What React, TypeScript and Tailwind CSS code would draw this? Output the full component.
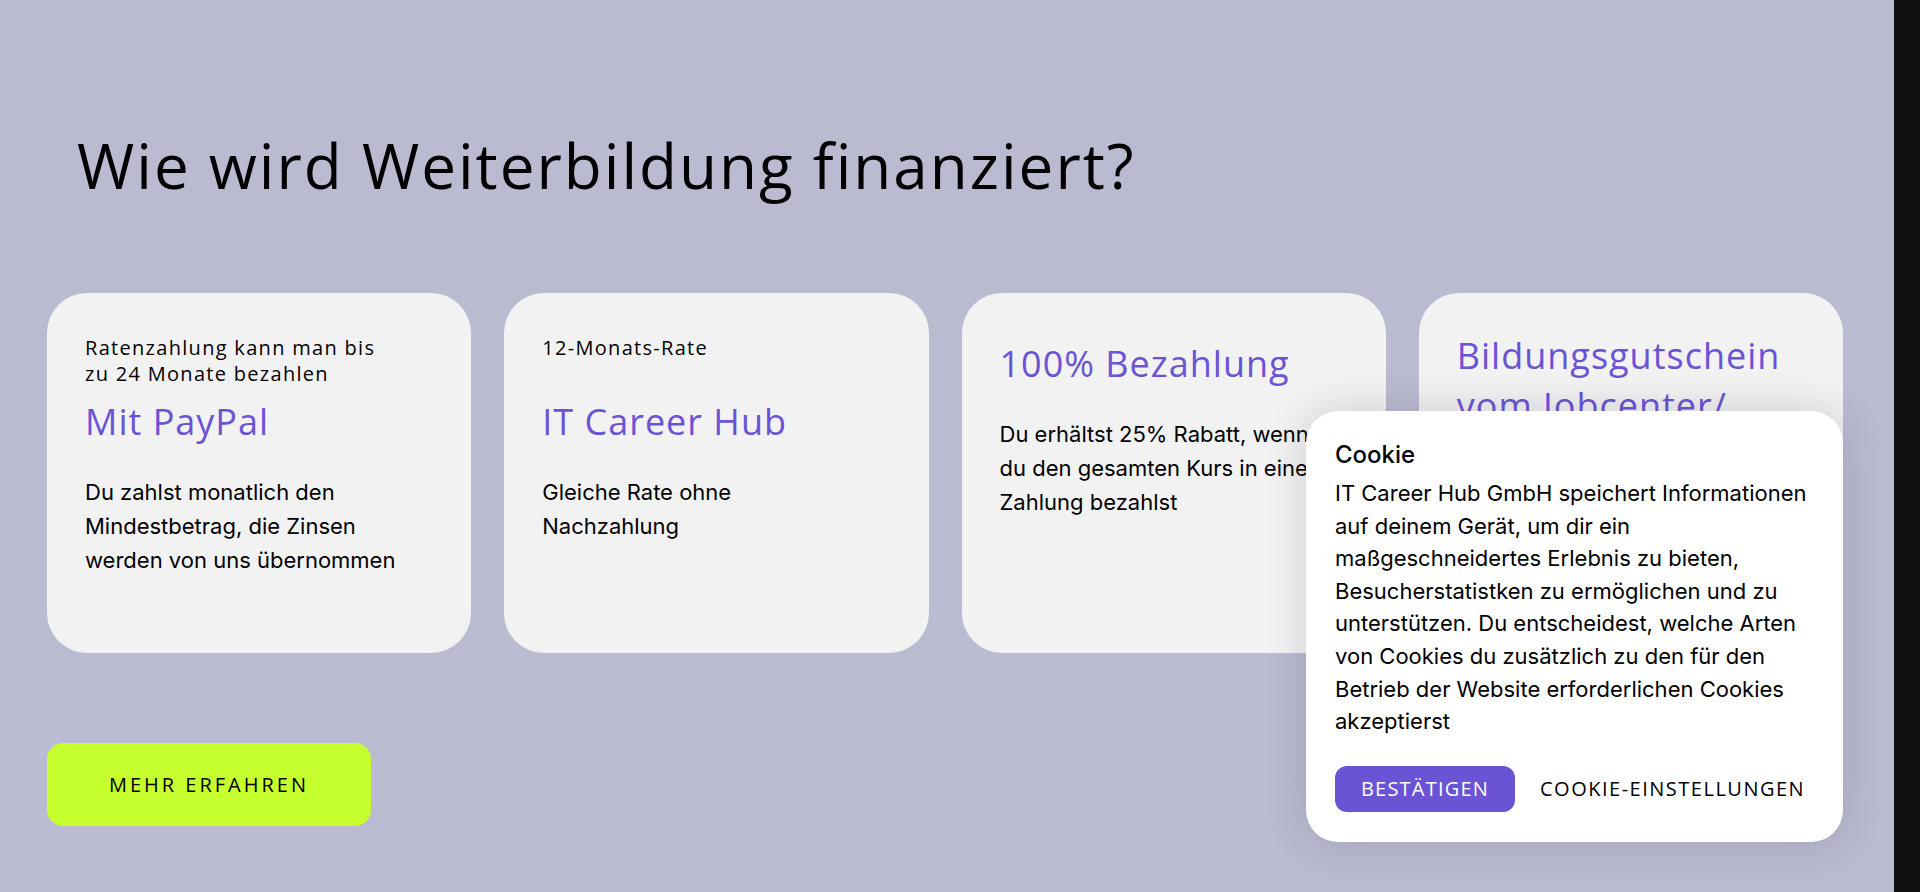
const display = "font-['Open_Sans','Lato',sans-serif]"

type Karte = {
  sub?: string[]
  titel: string[]
  text: string[]
  pt: string
}

const karten: Karte[] = [
  {
    sub: ['Ratenzahlung kann man bis', 'zu 24 Monate bezahlen'],
    titel: ['Mit PayPal'],
    text: ['Du zahlst monatlich den', 'Mindestbetrag, die Zinsen', 'werden von uns übernommen'],
    pt: 'pt-[42px]',
  },
  {
    sub: ['12-Monats-Rate'],
    titel: ['IT Career Hub'],
    text: ['Gleiche Rate ohne', 'Nachzahlung'],
    pt: 'pt-[42px]',
  },
  {
    titel: ['100% Bezahlung'],
    text: ['Du erhältst 25% Rabatt, wenn', 'du den gesamten Kurs in einer', 'Zahlung bezahlst'],
    pt: 'pt-[46px]',
  },
  {
    titel: ['Bildungsgutschein', 'vom Jobcenter/', 'Arbeitsagentur'],
    text: ['Wir sind AZAV-zertifiziert'],
    pt: 'pt-[38px]',
  },
]

function KarteBox({ k }: { k: Karte }) {
  return (
    <div className={`h-[360px] rounded-[40px] bg-[#f2f2f2] pl-[38px] pr-6 overflow-hidden ${k.pt}`}>
      {k.sub && (
        <div className={`h-[52px] text-[20px] leading-[26px] tracking-[1.3px] font-medium text-black ${display}`}>
          {k.sub.map((s) => (
            <div key={s}>{s}</div>
          ))}
        </div>
      )}
      <div className={`${k.sub ? 'mt-[10px]' : ''} text-[36px] leading-[50px] tracking-[1px] font-medium text-[#6b53d6] ${display}`}>
        {k.titel.map((t) => (
          <div key={t}>{t}</div>
        ))}
      </div>
      <div className="mt-[28px] text-[22px] leading-[34px] text-black font-['Inter',sans-serif]">
        {k.text.map((t) => (
          <div key={t}>{t}</div>
        ))}
      </div>
    </div>
  )
}

export default function App() {
  return (
    <div className="relative flex min-h-[892px] w-full bg-[#babbd0]">
      <div className="flex-1 pl-[47px] pr-[51px] pt-[128px]">
        <h1 className={`ml-[30px] text-[62px] leading-[74px] tracking-[2px] font-medium text-black ${display}`}>
          Wie wird Weiterbildung finanziert?
        </h1>

        <div className="mt-[91px] grid grid-cols-4 gap-[33px]">
          {karten.map((k) => (
            <KarteBox key={k.titel[0]} k={k} />
          ))}
        </div>

        <button
          type="button"
          className={`mt-[90px] flex h-[83px] w-[324px] items-center justify-center rounded-[16px] bg-[#c6ff2e] text-[20px] tracking-[3px] font-medium text-black ${display}`}
        >
          MEHR ERFAHREN
        </button>
      </div>

      <div className="w-[26px] bg-[#111111]" />

      <div className="absolute left-[1306px] top-[411px] w-[537px] rounded-[32px] bg-white px-[29px] pt-[28px] pb-[30px] shadow-[0_0_40px_rgba(40,40,80,0.18)] font-['Inter',sans-serif]">
        <div className="text-[24px] leading-[32px] font-medium text-black">Cookie</div>
        <p className="mt-[6px] text-[22px] leading-[32.6px] text-black">
          IT Career Hub GmbH speichert Informationen auf deinem Gerät, um dir ein maßgeschneidertes Erlebnis
          zu bieten, Besucherstatistken zu ermöglichen und zu unterstützen. Du entscheidest, welche Arten von
          Cookies du zusätzlich zu den für den Betrieb der Website erforderlichen Cookies akzeptierst
        </p>
        <div className="mt-[28px] flex items-center gap-[25px]">
          <button
            type="button"
            className={`h-[46px] w-[180px] rounded-[12px] bg-[#6b53d6] text-[20px] tracking-[1.2px] font-medium text-white ${display}`}
          >
            BESTÄTIGEN
          </button>
          <button type="button" className={`text-[20px] tracking-[1.5px] font-medium text-black ${display}`}>
            COOKIE-EINSTELLUNGEN
          </button>
        </div>
      </div>
    </div>
  )
}
